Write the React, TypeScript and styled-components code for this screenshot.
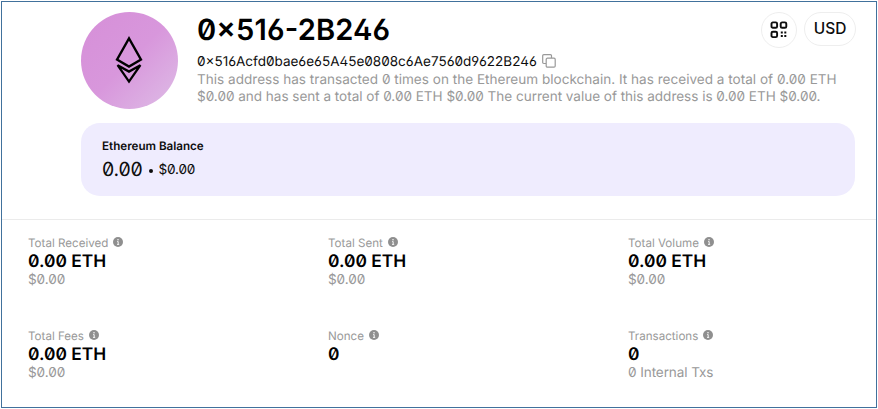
import React from "react";
import styled, { createGlobalStyle } from "styled-components";

const GlobalStyle = createGlobalStyle`
  * { box-sizing: border-box; }
  body {
    margin: 0;
    background: #fff;
    color: #0d0d0d;
    font-family: Inter, "Liberation Sans", sans-serif;
    font-feature-settings: "zero" 1, "ss01" 1, "calt" 1;
    text-rendering: geometricPrecision;
  }
`;

const Frame = styled.main`
  width: 876px;
  height: 407px;
  margin: 1px 0 0 1px;
  border: 1px solid #41719c;
  overflow: hidden;
`;

const Header = styled.header`
  display: flex;
  height: 121px;
  padding: 9.5px 20px 0 79px;
`;

const Avatar = styled.div`
  display: flex;
  align-items: center;
  justify-content: center;
  flex: none;
  width: 97px;
  height: 97px;
  padding-right: 1px;
  border-radius: 50%;
  background: linear-gradient(135deg, #d68fd8 0%, #d897dc 50%, #debde6 100%);
`;

const Identity = styled.div`
  flex: 1;
  min-width: 0;
  margin-left: 19px;
`;

const TopRow = styled.div`
  display: flex;
  height: 41px;
  justify-content: space-between;
`;

const Title = styled.h1`
  margin: 0;
  color: #000;
  font-size: 29.1px;
  font-weight: 600;
  line-height: 38px;
  letter-spacing: 0.15px;
  white-space: nowrap;
`;

const Actions = styled.div`
  display: flex;
  gap: 7px;
`;

const Pill = styled.button<{ $w: number; $h: number }>`
  display: flex;
  align-items: center;
  justify-content: center;
  width: ${(p) => p.$w}px;
  height: ${(p) => p.$h}px;
  padding: 0;
  border: 1px solid #eeeeee;
  border-radius: 18px;
  background: #fff;
  color: #0d0d0d;
  font: 500 15.5px/20px Inter, sans-serif;
`;

const PillText = styled.span`
  padding-top: 1px;
`;

const Address = styled.div`
  display: flex;
  align-items: center;
  gap: 5px;
  height: 19px;
  font-size: 13.52px;
  line-height: 20px;
  white-space: nowrap;

  svg {
    margin-top: -2px;
  }
`;

const Summary = styled.p`
  margin: 0;
  color: #999;
  font-size: 13.56px;
  line-height: 17px;
  white-space: nowrap;
`;

const SummaryLine = styled.span<{ $tracking?: number }>`
  display: block;
  letter-spacing: ${(p) => p.$tracking ?? 0}px;
`;

const BalanceCard = styled.section`
  width: 774px;
  height: 73px;
  margin-left: 79px;
  padding: 15px 21px 0;
  border-radius: 19px;
  background: #efecfe;
`;

const BalanceTitle = styled.div`
  font-size: 11.63px;
  font-weight: 600;
  line-height: 16px;
`;

const BalanceRow = styled.div`
  display: flex;
  align-items: center;
  height: 30px;
`;

const Amount = styled.span`
  font-size: 19.4px;
  letter-spacing: -0.2px;
`;

const Dot = styled.span`
  width: 4px;
  height: 4px;
  margin: 3px 6px 0;
  border-radius: 50%;
  background: #0d0d0d;
`;

const Fiat = styled.span`
  padding-top: 2px;
  font-size: 13.57px;
  letter-spacing: -0.2px;
`;

const Stats = styled.section`
  display: grid;
  grid-template-columns: repeat(3, 300px);
  grid-auto-rows: 93px;
  margin-top: 23px;
  padding: 15px 0 0 26px;
  border-top: 1px solid #ebebeb;
`;

const Stat = styled.div`
  white-space: nowrap;
`;

const Label = styled.div`
  display: flex;
  align-items: center;
  gap: 5px;
  height: 16px;
  color: #999;
  font-size: 11.6px;
  line-height: 16px;

  svg {
    margin-top: -2px;
  }
`;

const Value = styled.div`
  color: #000;
  font-size: 17.35px;
  font-weight: 600;
  line-height: 21px;
`;

const Note = styled.div`
  color: #999;
  font-size: 13.57px;
  line-height: 16px;
  letter-spacing: -0.1px;
`;

const EthLogo = () => (
  <svg width="28" height="48" viewBox="0 0 28 48" fill="none" stroke="#000" strokeWidth="2.3" strokeLinejoin="miter">
    <path d="M14 2.4 L26 23.6 L14 30.6 L2 23.6 Z" />
    <path d="M2.6 29.2 L14 35.6 L25.4 29.2 L14 45.6 Z" />
  </svg>
);

const CopyIcon = () => (
  <svg width="14" height="14" viewBox="0 0 14 14" fill="none" stroke="#999" strokeWidth="1.2">
    <path d="M4 9.5H1.8A1.1 1.1 0 0 1 .7 8.4V1.8A1.1 1.1 0 0 1 1.8.7h6.6a1.1 1.1 0 0 1 1.1 1.1V4" />
    <rect x="4.2" y="4.2" width="9" height="9" rx="1.2" />
  </svg>
);

const QrIcon = () => (
  <svg width="18" height="18" viewBox="0 0 18 18" fill="none" stroke="#0d0d0d" strokeWidth="1.9">
    <rect x="1.5" y="1.4" width="5.6" height="5.4" rx="1.4" />
    <rect x="10.7" y="1.4" width="5.6" height="5.4" rx="1.4" />
    <rect x="1.5" y="10.7" width="5.6" height="5.4" rx="1.4" />
    <path strokeWidth="2" d="M10.8 11.6h2M14.3 11.6h2M10.8 15.1h2M14.3 15.1h2" />
  </svg>
);

const InfoIcon = () => (
  <svg width="10" height="10" viewBox="0 0 10 10">
    <circle cx="5" cy="5" r="5" fill="#8f8f8f" />
    <circle cx="5" cy="2.7" r=".75" fill="#fff" />
    <path d="M4.1 4.6h1.1v2.7M4 7.4h2.2" fill="none" stroke="#fff" strokeWidth=".9" />
  </svg>
);

const stats = [
  { label: "Total Received", value: "0.00 ETH", note: "$0.00" },
  { label: "Total Sent", value: "0.00 ETH", note: "$0.00" },
  { label: "Total Volume", value: "0.00 ETH", note: "$0.00" },
  { label: "Total Fees", value: "0.00 ETH", note: "$0.00" },
  { label: "Nonce", value: "0" },
  { label: "Transactions", value: "0", note: "0 Internal Txs" },
];

export default function App() {
  return (
    <Frame>
      <GlobalStyle />
      <Header>
        <Avatar><EthLogo /></Avatar>
        <Identity>
          <TopRow>
            <Title>0×516-2B246</Title>
            <Actions>
              <Pill $w={36} $h={36} aria-label="QR code"><QrIcon /></Pill>
              <Pill $w={52} $h={34}><PillText>USD</PillText></Pill>
            </Actions>
          </TopRow>
          <Address>
            <span>0×516Acfd0bae6e65A45e0808c6Ae7560d9622B246</span>
            <CopyIcon />
          </Address>
          <Summary>
            <SummaryLine $tracking={0.01}>
              This address has transacted 0 times on the Ethereum blockchain. It has received a total of 0.00 ETH
            </SummaryLine>
            <SummaryLine $tracking={-0.025}>
              $0.00 and has sent a total of 0.00 ETH $0.00 The current value of this address is 0.00 ETH $0.00.
            </SummaryLine>
          </Summary>
        </Identity>
      </Header>
      <BalanceCard>
        <BalanceTitle>Ethereum Balance</BalanceTitle>
        <BalanceRow>
          <Amount>0.00</Amount>
          <Dot />
          <Fiat>$0.00</Fiat>
        </BalanceRow>
      </BalanceCard>
      <Stats>
        {stats.map((s) => (
          <Stat key={s.label}>
            <Label>{s.label}<InfoIcon /></Label>
            <Value>{s.value}</Value>
            {s.note && <Note>{s.note}</Note>}
          </Stat>
        ))}
      </Stats>
    </Frame>
  );
}
